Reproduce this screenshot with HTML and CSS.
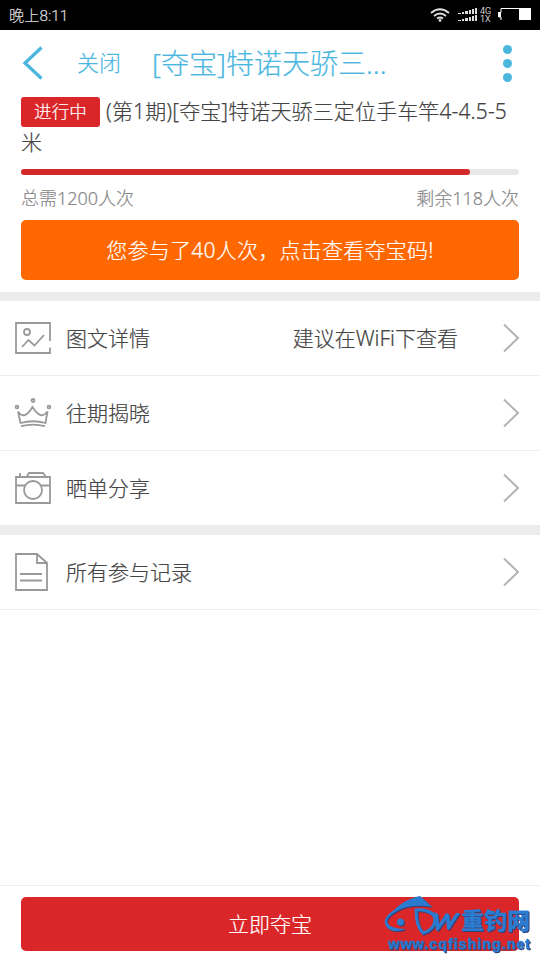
FILE: index.html
```
<!DOCTYPE html>
<html lang="zh-CN">
<head>
<meta charset="utf-8">
<title>夺宝</title>
<link rel="stylesheet" href="styles.css">
</head>
<body>
<div class="screen">
  <div class="status">
    <span class="time">晚上8:11</span>
    <div class="indicators">
      <svg class="wifi" width="20" height="14" viewBox="0 0 20 14" fill="none" stroke="#ddd" stroke-width="1.9"><path d="M1 5Q10-2.500 19 5M4 8Q10 3 16 8M7 10.600Q10 8.300 13 10.600"/><circle cx="10" cy="12.400" r="1.400" fill="#ddd" stroke="none"/></svg>
      <svg class="signal" width="20" height="14" viewBox="0 0 20 14" fill="#ddd"><path d="M0 5h3v1H0zM4 4h2v2H4zM7 3h3v3H7zM11 2h2v4h-2zM14 1h2v5h-2zM17 0h2v6h-2zM0 12h3v1H0zM4 11h2v2H4zM7 10h3v3H7zM11 9h2v4h-2zM14 8h2v5h-2zM17 7h2v6h-2z"/></svg>
      <div class="network"><span>4G</span><span>1X</span></div>
      <svg width="34" height="14" viewBox="0 0 34 14"><path d="M3 .5h30M3 .5V4.500H.8V9H3v3" fill="none" stroke="#fff"/><path d="M21 1h12v11H21zM0 4h3v5H0z" fill="#fff"/></svg>
    </div>
  </div>
  <header class="nav">
    <svg class="back" width="22" height="34" viewBox="0 0 22 34" fill="none" stroke="#4bb7df" stroke-width="3.300"><path d="M19.500 1.500L3 17l16.500 15.500"/></svg>
    <span class="close">关闭</span>
    <span class="nav-title">[夺宝]特诺天骄三...</span>
    <div class="more"><i></i><i></i><i></i></div>
  </header>
  <section class="summary">
    <h1 class="title"><span class="tag">进行中</span>(第1期)[夺宝]特诺天骄三定位手车竿4-4.5-5米</h1>
    <div class="track"><div class="bar" style="width:90.100%"></div></div>
    <div class="counts"><span>总需1200人次</span><span>剩余118人次</span></div>
    <div class="joined">您参与了40人次，点击查看夺宝码!</div>
  </section>
  <div class="gap"></div>
  <div class="row">
    <svg class="icon" width="38" height="38" viewBox="0 0 38 38"><path d="M36 22V4H2v30h34v-5.500"/><circle cx="13" cy="13" r="3"/><path d="M8 28l6.500-7 6 5.500L30 16"/></svg>
    <span>图文详情</span><span class="hint">建议在WiFi下查看</span>
    <svg class="arrow" width="18" height="30" viewBox="0 0 18 30"><path d="M2 1.500L16 15 2 28.500"/></svg>
  </div>
  <div class="row">
    <svg class="icon" width="38" height="38" viewBox="0 0 38 38"><path d="M6.500 29L4 17.500c4 6 9 5 14.500-4.500 6 9.500 10.500 10.500 15 4.500L31.500 29Q19 25.500 6.500 29zM7 32.200Q19 29 31 32.200"/><g stroke-width="1.800"><circle cx="3" cy="13" r="1.400"/><circle cx="19" cy="6.500" r="1.500"/><circle cx="35" cy="13" r="1.400"/></g></svg>
    <span>往期揭晓</span>
    <svg class="arrow" width="18" height="30" viewBox="0 0 18 30"><path d="M2 1.500L16 15 2 28.500"/></svg>
  </div>
  <div class="row last">
    <svg class="icon" width="38" height="38" viewBox="0 0 38 38"><path d="M2 8h34v26H2zM2 16.500h9M27 16.500h9M6 4v4M12.500 8l2.500-4h14l3 4"/><circle cx="19" cy="21" r="9"/></svg>
    <span>晒单分享</span>
    <svg class="arrow" width="18" height="30" viewBox="0 0 18 30"><path d="M2 1.500L16 15 2 28.500"/></svg>
  </div>
  <div class="gap"></div>
  <div class="row">
    <svg class="icon" width="38" height="38" viewBox="0 0 38 38"><path d="M2 1h21l10 9v27H2zM23 1v9h10M6 21h22M6 27.500h22"/></svg>
    <span>所有参与记录</span>
    <svg class="arrow" width="18" height="30" viewBox="0 0 18 30"><path d="M2 1.500L16 15 2 28.500"/></svg>
  </div>
  <footer class="footer"><div class="buy">立即夺宝</div></footer>
  <div class="watermark">
    <div class="brand">
      <svg width="76" height="41" viewBox="0 0 76 41"><path fill="#2b7bd0" d="M10 14C18 6 27 2 36 0c4 3 8 7 12 11-10-2-24-2-33 3C7 18 3 22 3 26c1 4 8 7 19 7-7 3-17 3-20-3-4-6 2-12 8-16z"/><circle cx="16.500" cy="26" r="3.500" fill="#2b7bd0"/><path fill="none" stroke="#2b7bd0" stroke-width="3" d="M32 14c9-1 18 2 19 9 0 7-5 12-12 14-4-4-7-13-7-23z"/><path fill="#2b7bd0" d="M50 16l4 2 1 10 7-11 3 1 1 8 6-9h4L65 34l-2-1-1-9-8 11-2-1z"/></svg>
      <span>重钓网</span>
    </div>
    <div class="url">www.cqfishing.net</div>
  </div>
</div>
</body>
</html>
```
FILE: styles.css
```
* { box-sizing: border-box; }
body { margin: 0; background: #fff; }
.screen {
  position: relative;
  display: flex;
  flex-direction: column;
  width: 540px;
  height: 960px;
  overflow: hidden;
  font-family: "Noto Sans", "Noto Sans CJK SC", sans-serif;
  font-weight: 300;
  font-size: 21px;
  color: #444;
  -webkit-text-stroke: 0.2px;
}
svg { display: block; flex: none; }
.status {
  display: flex;
  align-items: center;
  justify-content: space-between;
  height: 30px;
  padding: 0 8px 0 9px;
  background: #000;
  color: #ddd;
}
.time { font-family: Roboto, "Noto Sans CJK SC", sans-serif; font-size: 15.300px; line-height: 28px; margin-top: 1px; }
.indicators { display: flex; align-items: center; }
.signal { margin: 0 2px 0 8px; }
.network {
  display: flex;
  flex-direction: column;
  width: 18px;
  font: 300 9px/8px Roboto, sans-serif;
}
.nav {
  display: flex;
  align-items: center;
  height: 66px;
  padding: 0 28px 0 22px;
  color: #4bb7df;
}
.close { margin: 0 0 4px 33px; font-size: 22px; }
.nav-title { margin: 0 0 2px 31px; font-size: 28px; white-space: nowrap; }
.more { display: flex; flex-direction: column; gap: 5px; margin-left: auto; }
.more i { width: 9px; height: 9px; border-radius: 50%; background: #4bb7df; }
.summary { height: 196px; padding: 0 21px; }
.title {
  height: 62px;
  margin: 0;
  font-size: 21px;
  font-weight: 300;
  line-height: 31px;
  letter-spacing: 0.120px;
}
.tag {
  display: inline-block;
  width: 79px;
  height: 30px;
  margin: 1px 6px 0 0;
  border-radius: 3px;
  background: #da2628;
  color: #fff;
  font-size: 17.500px;
  line-height: 29px;
  text-align: center;
  vertical-align: top;
}
.track { height: 6px; margin-top: 11px; border-radius: 3px; background: #e8e8e8; }
.bar { height: 6px; border-radius: 3px; background: #d3292b; }
.counts {
  display: flex;
  justify-content: space-between;
  height: 45px;
  font-size: 18px;
  line-height: 46px;
  color: #888;
}
.joined {
  height: 60px;
  border-radius: 5px;
  background: #ff6700;
  color: #fff;
  line-height: 60px;
  letter-spacing: 0.250px;
  text-align: center;
}
.gap { height: 9px; background: #ececec; }
.row {
  display: flex;
  align-items: center;
  height: 75px;
  padding: 0 20px 0 14px;
  border-bottom: 1px solid #eee;
}
.row span { margin-bottom: 2px; }
.row.last { border-bottom-color: #ececec; }
.icon { margin-right: 14px; fill: none; stroke: #999; stroke-width: 1.800; }
.hint { margin-left: auto; }
.arrow { margin-left: auto; fill: none; stroke: #b3b3b3; stroke-width: 2; }
.hint + .arrow { margin-left: 44px; }
.footer {
  height: 75px;
  margin-top: auto;
  padding: 11px 21px 0;
  border-top: 1px solid #eee;
}
.buy {
  height: 54px;
  border-radius: 5px;
  background: #da2628;
  color: #fff;
  line-height: 54px;
  text-align: center;
}
.watermark {
  position: absolute;
  left: 384px;
  top: 896px;
  color: #2b7bd0;
  font-family: "Liberation Sans", "Noto Sans CJK SC", sans-serif;
  font-weight: 700;
  filter: drop-shadow(1px 1px 0 #314275);
}
.brand { display: flex; align-items: center; height: 40px; }
.brand span { margin: 9px 0 0 1px; font-size: 23px; font-weight: 900; line-height: 30px; white-space: nowrap; }
.url { padding-left: 4px; font-size: 14.500px; line-height: 16px; letter-spacing: 0.900px; -webkit-text-stroke: 0.4px; }
```
